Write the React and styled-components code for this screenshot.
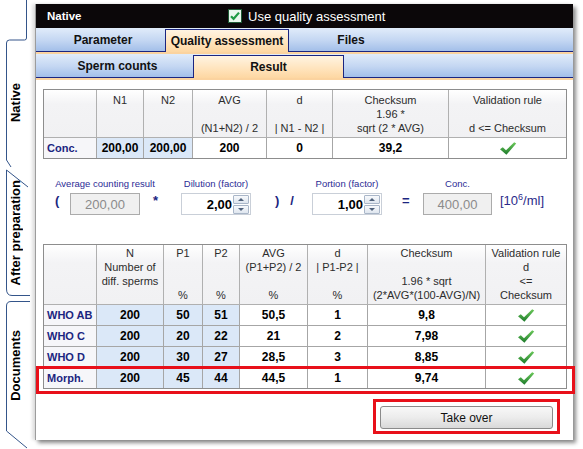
import React from "react";
import styled, { createGlobalStyle } from "styled-components";

const FONT = `"Liberation Sans", Arial, sans-serif`;
const NAVY = "#1b2580";
const TABLINE = "#34558a";

const Global = createGlobalStyle`
  html, body { margin: 0; padding: 0; background: #fff; }
  body { font-family: ${FONT}; color: #111; }
  * { box-sizing: border-box; }
`;

const Page = styled.div`
  display: flex;
  width: 583px;
  height: 449px;
  overflow: hidden;
`;

/* ---------- side tabs ---------- */
const SideTabs = styled.div`
  width: 35px;
  display: flex;
  flex-direction: column;
`;
const TopLine = styled.div`
  width: 27px;
  height: 38px;
  border-right: 1px solid ${TABLINE};
`;
const SideTab = styled.div`
  position: relative;
  height: ${(p) => p.$h}px;
  display: flex;
  align-items: center;
  justify-content: center;
  padding-right: 4px;
  padding-bottom: ${(p) => p.$pb || 0}px;
`;
const TabOutline = styled.svg`
  position: absolute;
  left: 0;
  top: 0;
  overflow: visible;
`;
const SideLabel = styled.span`
  writing-mode: vertical-rl;
  transform: rotate(180deg);
  font: bold 13px ${FONT};
  color: #000;
  white-space: nowrap;
`;

/* ---------- window ---------- */
const Window = styled.div`
  margin-top: 4px;
  width: 538px;
  height: 436px;
  background: #fff;
  border-left: 1px solid #9c9c9c;
  box-shadow: 3px 3px 4px rgba(0, 0, 0, 0.45), -3px 0 3px rgba(0, 0, 0, 0.12);
  display: flex;
  flex-direction: column;
`;
const TitleBar = styled.div`
  height: 24px;
  background: #0b0709;
  display: grid;
  grid-template-columns: 181px auto;
  align-items: center;
  padding-left: 11px;
  color: #fff;
`;
const TitleText = styled.span`
  font: bold 11.5px ${FONT};
`;
const CheckLabel = styled.label`
  display: flex;
  align-items: center;
  gap: 6px;
  font: 13px ${FONT};
  color: #fff;
`;
const TabRow = styled.div`
  height: 24px;
  display: flex;
  align-items: flex-end;
  padding-left: ${(p) => p.$pl}px;
  background: linear-gradient(#e1ecfa, #c3d6f2 55%, #a3bfe9);
  border-bottom: 1px solid ${NAVY};
`;
const Tab = styled.div`
  width: ${(p) => p.$w}px;
  height: ${(p) => (p.$active ? 23 : 22)}px;
  margin-bottom: ${(p) => (p.$active ? -1 : 0)}px;
  display: flex;
  align-items: center;
  justify-content: center;
  font: bold 12px ${FONT};
  color: #111;
  background: ${(p) =>
    p.$active ? "linear-gradient(#fff4e2, #ffe3bb 60%, #fdd7a2)" : "transparent"};
  border: ${(p) => (p.$active ? `1px solid ${NAVY}` : "none")};
  border-bottom: none;
`;
const OrangeStrip = styled.div`
  height: 2px;
  background: #fbd39f;
`;
const Content = styled.div`
  flex: 1;
  padding: 9px 0 0 7px;
  display: flex;
  flex-direction: column;
`;

/* ---------- tables ---------- */
const TableWrap = styled.div`
  position: relative;
  width: 524px;
`;
const Grid = styled.div`
  display: grid;
  grid-template-columns: ${(p) => p.$cols};
  border: 1px solid #8d8d8d;
  width: 524px;
`;
const HeadCell = styled.div`
  height: ${(p) => p.$h}px;
  padding-top: ${(p) => p.$pt}px;
  border-right: ${(p) => (p.$lastCol ? "none" : "1px solid #b0b0b0")};
  border-bottom: 1px solid #b0b0b0;
  background: linear-gradient(#ffffff, #f3f3f5 30%, #f1f1f3);
  text-align: center;
  font: 11px ${FONT};
  line-height: 14px;
  color: #2c2c2c;
`;
const HeadLine = styled.div`
  height: 14px;
  white-space: nowrap;
`;
const Cell = styled.div`
  height: ${(p) => (p.$lastRow ? 20 : 21)}px;
  border-right: ${(p) => (p.$lastCol ? "none" : "1px solid #a6a6a6")};
  border-bottom: ${(p) => (p.$lastRow ? "none" : "1px solid #a6a6a6")};
  display: flex;
  align-items: center;
  justify-content: ${(p) => (p.$tone === "label" ? "flex-start" : "center")};
  padding-left: ${(p) => (p.$tone === "label" ? 3 : 0)}px;
  background: ${(p) =>
    p.$tone === "blue" ? "#dbe8f8" : p.$tone === "label" ? "#f6f6f9" : "#fff"};
  color: ${(p) => (p.$tone === "label" ? NAVY : "#000")};
  font: bold ${(p) => (p.$tone === "label" ? 11 : 12)}px ${FONT};
`;
const Highlight = styled.div`
  position: absolute;
  left: -7px;
  right: -8px;
  bottom: -5px;
  height: 28px;
  border: 3px solid #e8101a;
  pointer-events: none;
`;

/* ---------- formula ---------- */
const FormulaRow = styled.div`
  display: flex;
  align-items: flex-end;
  margin-top: 19px;
  margin-bottom: 29px;
`;
const Field = styled.div`
  width: ${(p) => p.$w}px;
  display: flex;
  flex-direction: column;
  align-items: center;
  gap: 3px;
`;
const FieldLabel = styled.span`
  font: 9.5px ${FONT};
  line-height: 12px;
  color: #2b2b95;
  white-space: nowrap;
`;
const Op = styled.div`
  width: ${(p) => p.$w}px;
  padding-left: ${(p) => p.$pl}px;
  height: 22px;
  line-height: 22px;
  font: bold 13px ${FONT};
  color: ${NAVY};
  white-space: pre;
`;
const Unit = styled.div`
  height: 22px;
  line-height: 22px;
  margin-left: 8px;
  font: 13px ${FONT};
  color: #2a2a8a;
  sup { font-size: 9px; vertical-align: 5px; line-height: 0; }
`;
const ReadOnlyBox = styled.div`
  width: 100%;
  height: 22px;
  border: 1px solid #ababab;
  background: #f0f0f0;
  display: flex;
  align-items: center;
  justify-content: center;
  font: 13px ${FONT};
  color: #8b8b8b;
`;
const SpinBox = styled.div`
  width: 100%;
  height: 22px;
  border: 1px solid #c9cfd8;
  background: #fff;
  display: flex;
  align-items: center;
  justify-content: flex-end;
  padding-right: 1px;
  gap: 1px;
`;
const SpinValue = styled.span`
  font: bold 13px ${FONT};
  color: #000;
`;
const SpinButtons = styled.div`
  display: flex;
  flex-direction: column;
  gap: 1px;
`;
const SpinBtn = styled.div`
  width: 16px;
  height: 9px;
  border: 1px solid #a9b6c8;
  border-radius: 1px;
  background: linear-gradient(#f7f9fc, #dfe6ef);
  display: flex;
  align-items: center;
  justify-content: center;
  &::after {
    content: "";
    border-left: 3px solid transparent;
    border-right: 3px solid transparent;
    ${(p) => (p.$down ? "border-top: 3px solid #50627c;" : "border-bottom: 3px solid #50627c;")}
  }
`;

/* ---------- button ---------- */
const ButtonRow = styled.div`
  display: flex;
  justify-content: flex-end;
  width: 524px;
  padding-right: 7px;
  margin-top: 10px;
`;
const MarkFrame = styled.div`
  border: 3px solid #e8101a;
  padding: 4px 4px 2px 4px;
  display: flex;
`;
const Button = styled.button`
  width: 173px;
  height: 23px;
  border: 1px solid #8a8a8a;
  border-radius: 3px;
  background: linear-gradient(#f8f8f8, #ececec 50%, #d9d9d9);
  font: 12px ${FONT};
  color: #111;
  padding: 0;
`;

/* ---------- icons ---------- */
const Check = () => (
  <svg width="18" height="15" viewBox="0 0 18 15">
    <defs>
      <linearGradient id="cg" x1="0" y1="0" x2="0" y2="1">
        <stop offset="0" stopColor="#6cc95a" />
        <stop offset="1" stopColor="#1d7a2c" />
      </linearGradient>
    </defs>
    <path d="M1 8.3 L3.8 6.2 L7 9.3 L15.2 1.3 L17.2 2.6 L7.4 13.8 Z" fill="url(#cg)" />
  </svg>
);

const TitleCheck = () => (
  <svg width="14" height="14" viewBox="0 0 14 14">
    <rect x="0.5" y="0.5" width="13" height="13" fill="#e9f7ee" stroke="#1f5a36" />
    <path d="M3 7.2 L5.6 9.8 L11 3.6" fill="none" stroke="#1e9a45" strokeWidth="2.2" />
  </svg>
);

/* ---------- data ---------- */
const cols1 = "53px 47px 49px 74px 66px 116px 117px";
const head1 = [
  ["", "", ""],
  ["N1", "", ""],
  ["N2", "", ""],
  ["AVG", "", "(N1+N2) / 2"],
  ["d", "", "| N1 - N2 |"],
  ["Checksum", "1.96 *", "sqrt (2 * AVG)"],
  ["Validation rule", "", "d <= Checksum"],
];
const tones1 = ["label", "blue", "blue", "white", "white", "white", "white"];
const rows1 = [["Conc.", "200,00", "200,00", "200", "0", "39,2", "check"]];

const cols2 = "53px 67px 39px 37px 68px 60px 118px 80px";
const head2 = [
  ["", "", "", ""],
  ["N", "Number of", "diff. sperms", ""],
  ["P1", "", "", "%"],
  ["P2", "", "", "%"],
  ["AVG", "(P1+P2) / 2", "", "%"],
  ["d", "| P1-P2 |", "", "%"],
  ["Checksum", "", "1.96 * sqrt", "(2*AVG*(100-AVG)/N)"],
  ["Validation rule", "d", "<=", "Checksum"],
];
const tones2 = ["label", "blue", "blue", "blue", "white", "white", "white", "white"];
const rows2 = [
  ["WHO AB", "200", "50", "51", "50,5", "1", "9,8", "check"],
  ["WHO C", "200", "20", "22", "21", "2", "7,98", "check"],
  ["WHO D", "200", "30", "27", "28,5", "3", "8,85", "check"],
  ["Morph.", "200", "45", "44", "44,5", "1", "9,74", "check"],
];

function DataTable({ cols, head, headH, headPt, tones, rows, children }) {
  const n = head.length;
  return (
    <TableWrap>
      <Grid $cols={cols}>
        {head.map((lines, i) => (
          <HeadCell key={"h" + i} $h={headH} $pt={headPt} $lastCol={i === n - 1}>
            {lines.map((l, j) => (
              <HeadLine key={j}>{l}</HeadLine>
            ))}
          </HeadCell>
        ))}
        {rows.map((r, ri) =>
          r.map((v, ci) => (
            <Cell
              key={ri + "-" + ci}
              $tone={tones[ci]}
              $lastCol={ci === n - 1}
              $lastRow={ri === rows.length - 1}
            >
              {v === "check" ? <Check /> : v}
            </Cell>
          ))
        )}
      </Grid>
      {children}
    </TableWrap>
  );
}

function Spinner({ value }) {
  return (
    <SpinBox>
      <SpinValue>{value}</SpinValue>
      <SpinButtons>
        <SpinBtn />
        <SpinBtn $down />
      </SpinButtons>
    </SpinBox>
  );
}

export default function App() {
  return (
    <>
      <Global />
      <Page>
        <SideTabs>
          <TopLine />
          <SideTab $h={130}>
            <TabOutline width="35" height="130">
              <path
                d="M26.5 0 Q26.5 2 24.5 2 L9.5 2 Q6.5 2 6.5 5 L6.5 122 L11 129"
                fill="none"
                stroke={TABLINE}
              />
            </TabOutline>
            <SideLabel>Native</SideLabel>
          </SideTab>
          <SideTab $h={130}>
            <TabOutline width="35" height="130">
              <path
                d="M28 19 L6.5 2 L6.5 121 Q6.5 127.5 12 127.5 L30 127.5"
                fill="none"
                stroke={TABLINE}
              />
            </TabOutline>
            <SideLabel>After preparation</SideLabel>
          </SideTab>
          <SideTab $h={151} $pb={16}>
            <TabOutline width="35" height="151">
              <path
                d="M30 3.5 L11 3.5 Q6.5 3.5 6.5 8 L6.5 133 L27 150"
                fill="none"
                stroke={TABLINE}
              />
            </TabOutline>
            <SideLabel>Documents</SideLabel>
          </SideTab>
        </SideTabs>

        <Window>
          <TitleBar>
            <TitleText>Native</TitleText>
            <CheckLabel>
              <TitleCheck />
              Use quality assessment
            </CheckLabel>
          </TitleBar>
          <TabRow $pl={5}>
            <Tab $w={124}>Parameter</Tab>
            <Tab $w={124} $active>
              Quality assessment
            </Tab>
            <Tab $w={124}>Files</Tab>
          </TabRow>
          <OrangeStrip />
          <TabRow $pl={6}>
            <Tab $w={151}>Sperm counts</Tab>
            <Tab $w={151} $active>
              Result
            </Tab>
          </TabRow>
          <OrangeStrip />

          <Content>
            <DataTable
              cols={cols1}
              head={head1}
              headH={48}
              headPt={3}
              tones={tones1}
              rows={rows1}
            />

            <FormulaRow>
              <Op $w={27} $pl={12}>(</Op>
              <Field $w={70}>
                <FieldLabel>Average counting result</FieldLabel>
                <ReadOnlyBox>200,00</ReadOnlyBox>
              </Field>
              <Op $w={41} $pl={13}>*</Op>
              <Field $w={70}>
                <FieldLabel>Dilution (factor)</FieldLabel>
                <Spinner value="2,00" />
              </Field>
              <Op $w={61} $pl={24}>{")   /"}</Op>
              <Field $w={70}>
                <FieldLabel>Portion (factor)</FieldLabel>
                <Spinner value="1,00" />
              </Field>
              <Op $w={41} $pl={20}>=</Op>
              <Field $w={69}>
                <FieldLabel>Conc.</FieldLabel>
                <ReadOnlyBox>400,00</ReadOnlyBox>
              </Field>
              <Unit>
                [10<sup>6</sup>/ml]
              </Unit>
            </FormulaRow>

            <DataTable
              cols={cols2}
              head={head2}
              headH={60}
              headPt={1}
              tones={tones2}
              rows={rows2}
            >
              <Highlight />
            </DataTable>

            <ButtonRow>
              <MarkFrame>
                <Button>Take over</Button>
              </MarkFrame>
            </ButtonRow>
          </Content>
        </Window>
      </Page>
    </>
  );
}
